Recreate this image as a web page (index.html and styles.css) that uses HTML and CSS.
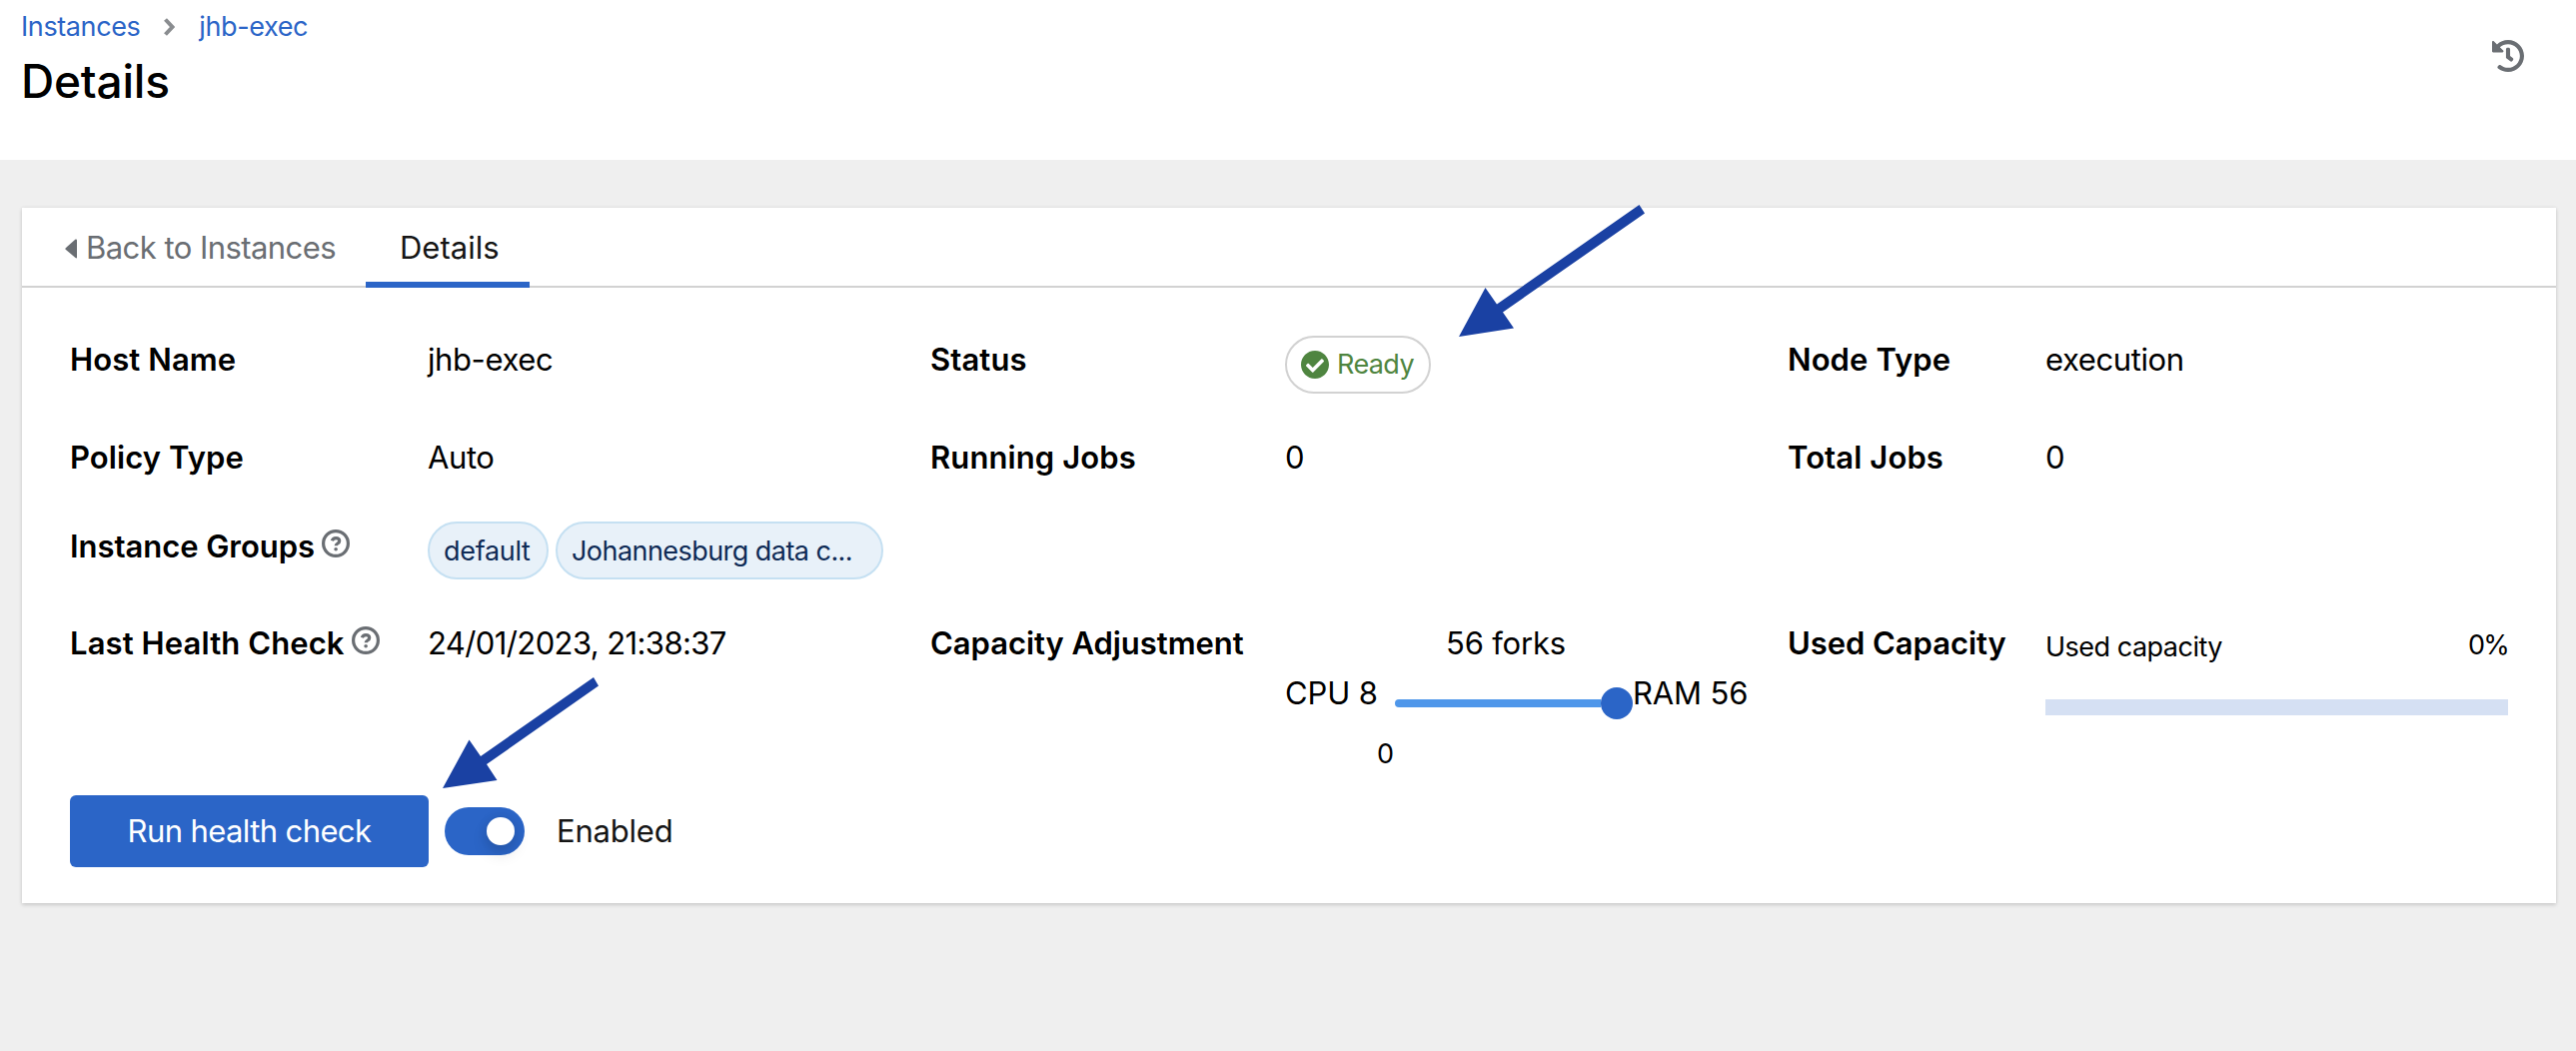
FILE: index.html
```html
<!DOCTYPE html>
<html lang="en">
<head>
<meta charset="utf-8">
<title>Instance details</title>
<link rel="stylesheet" href="styles.css">
</head>
<body>
<header class="page-header">
  <div class="heading">
    <nav class="breadcrumb">
      <a href="#">Instances</a>
      <svg class="crumb-sep" viewBox="0 0 12 20"><path d="M2.5 2.5 9.5 10l-7 7.5"/></svg>
      <a href="#">jhb-exec</a>
    </nav>
    <h1>Details</h1>
  </div>
  <svg class="history" viewBox="8 8 496 496"><path d="M504 255.531c.253 136.64-111.18 248.372-247.82 248.468-59.015.042-113.223-20.53-155.822-54.911-11.077-8.94-11.905-25.541-1.839-35.607l11.267-11.267c8.609-8.609 22.353-9.551 31.891-1.984C173.062 425.135 212.781 440 256 440c101.705 0 184-82.311 184-184 0-101.705-82.311-184-184-184-48.814 0-93.149 18.969-126.068 49.932l50.754 50.754c10.08 10.08 2.941 27.314-11.313 27.314H24c-8.837 0-16-7.163-16-16V38.627c0-14.254 17.234-21.393 27.314-11.314l49.372 49.372C129.209 34.136 189.552 8 256 8c136.81 0 247.747 110.78 248 247.531zm-180.912 78.784l9.823-12.63c8.138-10.463 6.253-25.542-4.21-33.679L288 256.349V152c0-13.255-10.745-24-24-24h-16c-13.255 0-24 10.745-24 24v135.651l65.409 50.874c10.463 8.137 25.541 6.253 33.679-4.21z"/></svg>
</header>
<main class="card">
  <nav class="tabs">
    <a class="tab tab-back" href="#"><svg class="caret" viewBox="0 0 12 20"><path d="M10.5.5Q12 0 12 1.500v17Q12 20 10.500 19L.7 10.800Q0 10 .7 9.200z"/></svg>Back to Instances</a>
    <a class="tab tab-active" href="#">Details</a>
  </nav>
  <dl class="details">
    <dt>Host Name</dt><dd>jhb-exec</dd>
    <dt>Status</dt>
    <dd><span class="status"><svg viewBox="8 8 496 496"><path d="M504 256c0 136.967-111.033 248-248 248S8 392.967 8 256 119.033 8 256 8s248 111.033 248 248zM227.314 387.314l184-184c6.248-6.248 6.248-16.379 0-22.627l-22.627-22.627c-6.248-6.249-16.379-6.249-22.628 0L216 308.118l-70.059-70.059c-6.248-6.248-16.379-6.248-22.628 0l-22.627 22.627c-6.248 6.248-6.248 16.379 0 22.627l104 104c6.249 6.249 16.379 6.249 22.628.001z"/></svg>Ready</span></dd>
    <dt>Node Type</dt><dd>execution</dd>

    <dt>Policy Type</dt><dd>Auto</dd>
    <dt>Running Jobs</dt><dd>0</dd>
    <dt>Total Jobs</dt><dd>0</dd>

    <dt class="with-groups">Instance Groups<svg class="help" viewBox="0 0 28 28"><circle cx="14" cy="14" r="12.400"/><path d="M10.300 11.300C10.900 9.400 12.200 8.600 14.100 8.600c2.100 0 3.600 1.100 3.600 2.900 0 2.600-3.500 2.400-3.500 4.800"/><circle class="dot" cx="14.100" cy="19.700" r="1.800"/></svg></dt>
    <dd class="groups"><span class="chip">default</span><span class="chip chip-long">Johannesburg data c...</span></dd>

    <dt>Last Health Check<svg class="help" viewBox="0 0 28 28"><circle cx="14" cy="14" r="12.400"/><path d="M10.300 11.300C10.900 9.400 12.200 8.600 14.100 8.600c2.100 0 3.600 1.100 3.600 2.900 0 2.600-3.500 2.400-3.500 4.800"/><circle class="dot" cx="14.100" cy="19.700" r="1.800"/></svg></dt>
    <dd class="date">24/01/2023, 21:38:37</dd>
    <dt class="tight">Capacity Adjustment</dt>
    <dd class="capacity">
      <div class="forks">56 forks</div>
      <div class="slider-row">
        <span>CPU 8</span>
        <div class="slider"><div class="rail"></div><div class="thumb"></div></div>
        <span>RAM 56</span>
      </div>
      <div class="slider-value">0</div>
    </dd>
    <dt class="tight">Used Capacity</dt>
    <dd class="usage">
      <div class="usage-head"><span>Used capacity</span><span class="percent">0%</span></div>
      <div class="usage-bar"></div>
    </dd>
  </dl>
  <div class="actions">
    <button class="run">Run health check</button>
    <span class="switch"><span class="knob"></span></span>
    <span class="enabled">Enabled</span>
  </div>
  <svg class="arrow arrow-status" viewBox="0 0 186 132"><path d="M0 132 26.500 83 38 99.500 180.500 0 186 8.500 44 107.500 55 123.500z"/></svg>
  <svg class="arrow arrow-run" viewBox="0 0 156 111"><path d="M0 111 26.500 62.500 38 79 151 0 156 8.500 44 87 54.500 103z"/></svg>
</main>
</body>
</html>
```
FILE: styles.css
```css
* { box-sizing: border-box; }

body {
  margin: 0;
  min-height: 1052px;
  background: #efefef;
  color: #000;
  font-family: Inter, "Liberation Sans", sans-serif;
  font-size: 31px;
  line-height: 48px;
  letter-spacing: -0.4px;
  white-space: nowrap;
}

a { text-decoration: none; }

.page-header {
  display: flex;
  justify-content: space-between;
  height: 160px;
  padding: 6px 52px 0 21px;
  background: #fff;
}

.breadcrumb {
  display: flex;
  align-items: center;
  font-size: 27px;
  line-height: 42px;
}
.breadcrumb a { color: #2b65c7; }

.crumb-sep { width: 12px; height: 20px; margin: 0 24px 0 23px; }
.crumb-sep path { fill: none; stroke: #8a8d90; stroke-width: 4; }

h1 {
  margin: 2px 0 0;
  font-size: 46px;
  font-weight: 550;
  line-height: 62px;
  letter-spacing: -0.2px;
}

.history { width: 32px; height: 32px; margin-top: 34px; fill: #6a6e73; }

.card {
  position: relative;
  display: flex;
  flex-direction: column;
  width: 2536px;
  height: 696px;
  margin: 48px 0 0 22px;
  background: #fff;
  box-shadow: 0 2px 4px rgba(3, 3, 3, .13), 0 0 4px rgba(3, 3, 3, .07);
}

.tabs {
  display: flex;
  height: 80px;
  padding-left: 43px;
  border-bottom: 2px solid #d2d2d2;
}
.tab { height: 80px; padding-top: 16px; color: #151515; }
.tab-back { width: 301px; color: #6a6e73; letter-spacing: -0.55px; }
.tab-active { width: 164px; padding-left: 34px; border-bottom: 6px solid #2b65c7; letter-spacing: 0; }
.caret { width: 12px; height: 20px; margin-right: 9px; fill: #6a6e73; }

.details {
  display: grid;
  grid-template-columns: 358px 503px 355px 503px 258px 463px;
  gap: 40px 0;
  height: 460px;
  align-content: start;
  margin: 48px 0 0 48px;
}
dt { font-weight: 600; letter-spacing: 0.1px; }
dd { margin: 0; }
.tight { letter-spacing: -0.05px; }
.with-groups { padding-top: 1px; letter-spacing: -0.05px; }

.help {
  width: 28px;
  height: 28px;
  margin-left: 7px;
  fill: none;
  stroke: #6a6e73;
  stroke-width: 3.2;
}
.help .dot { fill: #6a6e73; stroke: none; }

.date { letter-spacing: -0.6px; }

.status {
  display: flex;
  align-items: center;
  gap: 8px;
  width: 146px;
  height: 58px;
  padding-left: 14px;
  border: 2px solid #d2d2d2;
  border-radius: 29px;
  color: #4f8540;
  font-size: 27px;
  line-height: 56px;
  letter-spacing: -0.6px;
}
.status svg { width: 28px; height: 28px; fill: #4f8540; }

.groups { grid-column: 2 / -1; display: flex; gap: 7px; }
.chip {
  height: 58px;
  padding: 0 14px;
  border: 2px solid #c5e0f2;
  border-radius: 29px;
  background: #e8f1f9;
  color: #0f2b56;
  font-size: 27px;
  line-height: 55px;
  letter-spacing: -0.3px;
}
.chip:first-child { width: 121px; }
.chip-long { width: 328px; letter-spacing: -0.55px; }

.capacity { width: 442px; }
.forks { text-align: center; letter-spacing: -0.2px; }
.slider-row { display: flex; height: 48px; margin-top: 2px; letter-spacing: -0.1px; }
.slider { display: flex; flex: none; align-items: center; width: 238px; height: 32px; margin: 18px 0 0 17px; }
.rail { width: 206px; height: 8px; border-radius: 4px 0 0 4px; background: #4f97ea; }
.thumb { width: 32px; height: 32px; border-radius: 50%; background: #2b65c7; }
.slider-value { margin: 16px 0 0 92px; font-size: 27px; line-height: 42px; }

.usage { font-size: 27px; letter-spacing: -0.5px; }
.usage-head { display: flex; justify-content: space-between; height: 80px; line-height: 55px; }
.percent { line-height: 51px; letter-spacing: -1.8px; }
.usage-bar { height: 16px; background: #d5e0f3; }

.actions { display: flex; align-items: center; margin-left: 48px; }
.run {
  width: 359px;
  height: 72px;
  padding: 0;
  border: 0;
  border-radius: 6px;
  background: #2b65c7;
  color: #fff;
  font: inherit;
  letter-spacing: -0.6px;
}
.switch {
  display: flex;
  align-items: center;
  justify-content: flex-end;
  width: 80px;
  height: 48px;
  margin-left: 16px;
  padding-right: 10px;
  border-radius: 24px;
  background: #2b65c7;
}
.knob { width: 28px; height: 28px; border-radius: 50%; background: #fff; box-shadow: 0 8px 16px rgba(3, 3, 3, .14), 0 0 12px rgba(3, 3, 3, .08); }
.enabled { margin-left: 32px; color: #151515; letter-spacing: -0.2px; }

/* Callout arrows drawn over the card */
.arrow { position: absolute; fill: #1a41a3; }
.arrow-status { left: 1438px; top: -3px; width: 186px; height: 132px; }
.arrow-run { left: 421px; top: 470px; width: 156px; height: 111px; }
```
